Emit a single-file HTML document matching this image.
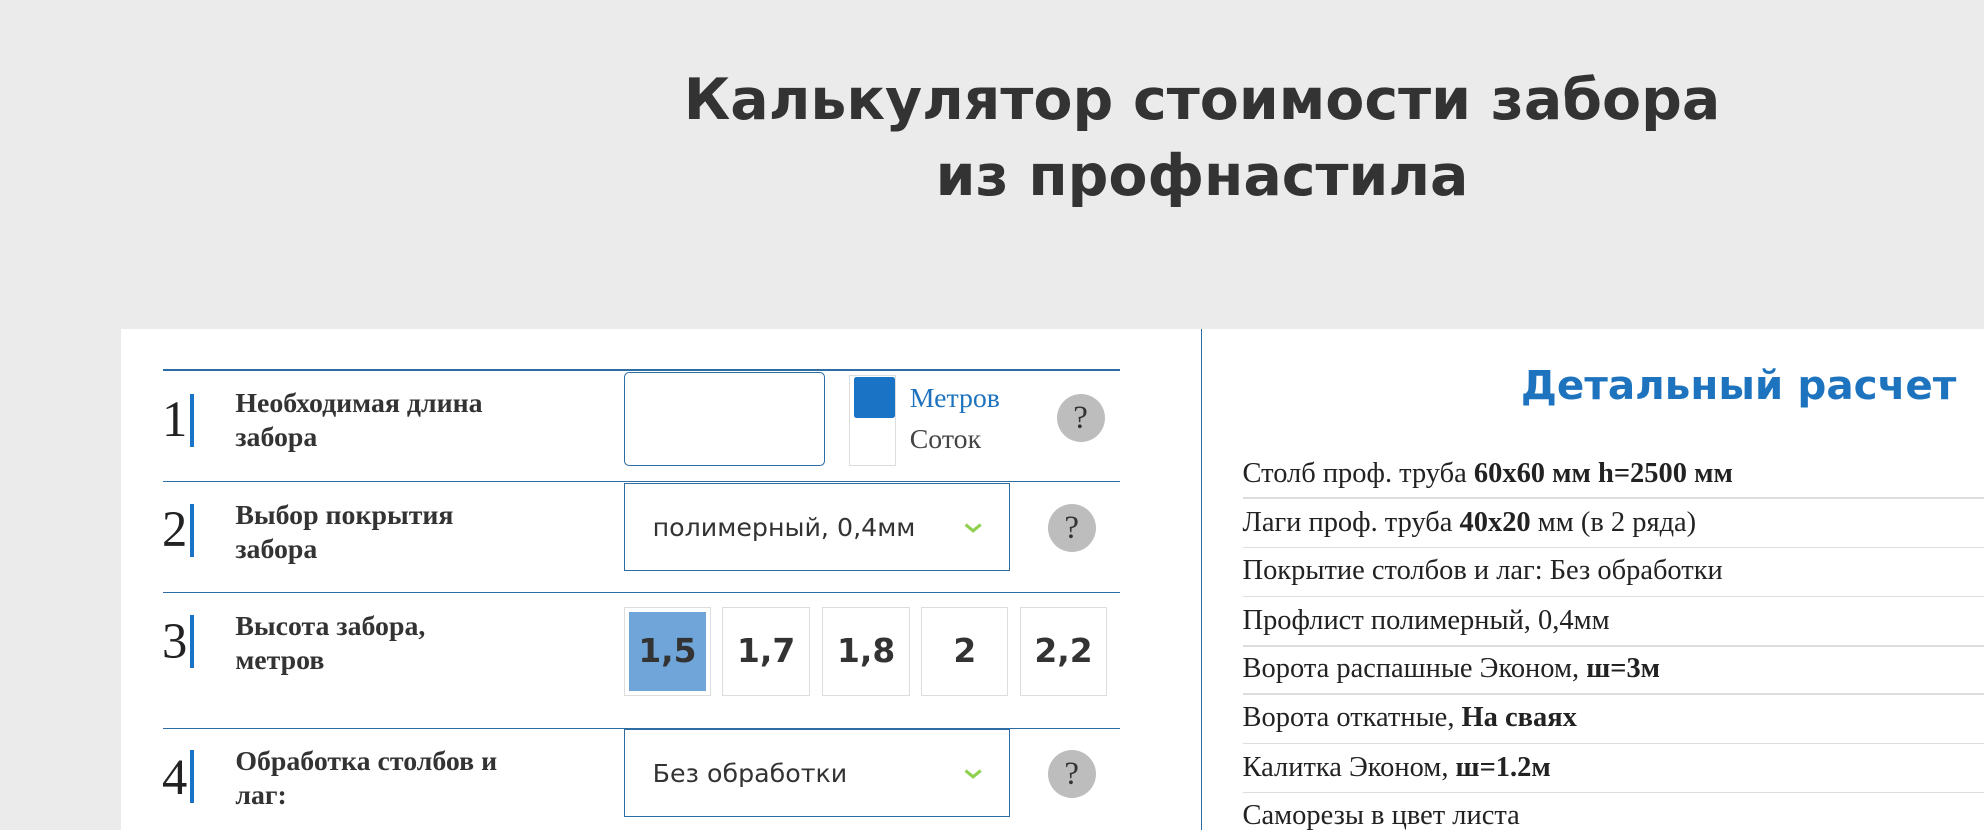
<!DOCTYPE html>
<html><head><meta charset="utf-8"><style>
html,body{margin:0;padding:0;width:1984px;height:830px;overflow:hidden;background:#ebebeb}
#w{position:relative;width:1568px;height:656px;zoom:1.26531;overflow:hidden}
.a{position:absolute}
.t{font-family:"DejaVu Sans","Liberation Sans",sans-serif;font-weight:bold;color:#333;font-size:45px;line-height:60px;text-align:center;left:500px;width:900px;top:50px}
.card{left:96px;top:260px;width:1500px;height:420px;background:#fff}
.div{left:949px;top:260px;width:1px;height:400px;background:#2e6da4}
.hl{left:129px;width:756px;height:1px;background:#2e6da4}
.num{font-family:"Liberation Serif",serif;font-size:40px;color:#222;left:128px}
.bar{left:150px;width:3px;height:42px;background:#1a73c4}
.lab{font-family:"Liberation Serif",serif;font-weight:bold;font-size:22px;line-height:27px;color:#333;left:186px}
.q{width:38px;height:38px;border-radius:50%;background:#bdbdbd;color:#333;font-family:"Liberation Serif",serif;font-size:26px;line-height:38px;text-align:center}
.sel{left:493px;width:305px;height:69px;border:1px solid #2e6da4;box-sizing:border-box;font-family:"DejaVu Sans","Liberation Sans",sans-serif;font-size:20px;color:#333;line-height:69px;padding-left:22px}
.chev{position:absolute;right:20px;top:30px}
.b{top:480px;width:69px;height:70px;border:1px solid #ddd;box-sizing:border-box;font-family:"DejaVu Sans",sans-serif;font-weight:bold;font-size:26px;color:#333;text-align:center;line-height:68px}
.h2{font-family:"DejaVu Sans","Liberation Sans",sans-serif;font-weight:bold;color:#1e73be;font-size:32px;left:1202px;top:285px;white-space:nowrap}
.li{left:982px;font-family:"Liberation Serif",serif;font-size:22.5px;color:#222;white-space:nowrap}
.sep{left:982px;width:600px;height:1px;background:#ddd}
</style></head><body><div id="w">
<div class="a t">Калькулятор стоимости забора<br>из профнастила</div>
<div class="a card"></div>
<div class="a div"></div>
<div class="a hl" style="top:292px"></div>
<div class="a hl" style="top:380px"></div>
<div class="a hl" style="top:468px"></div>
<div class="a hl" style="top:575px"></div>

<div class="a num" style="top:308px">1</div><div class="a bar" style="top:311px"></div>
<div class="a lab" style="top:306px">Необходимая длина<br>забора</div>
<div class="a" style="left:493px;top:294px;width:159px;height:74px;border:1px solid #2e6da4;border-radius:4px;box-sizing:border-box"></div>
<div class="a" style="left:671px;top:296px;width:37px;height:72px;border:1px solid #ddd;box-sizing:border-box"></div>
<div class="a" style="left:675px;top:298px;width:32px;height:32px;background:#1a73c4;border-radius:2px"></div>
<div class="a" style="left:719px;top:303px;font-family:'Liberation Serif',serif;font-size:22px;color:#1e73be">Метров</div>
<div class="a" style="left:719px;top:335px;font-family:'Liberation Serif',serif;font-size:22px;color:#444">Соток</div>
<div class="a q" style="left:835px;top:311px">?</div>

<div class="a num" style="top:395px">2</div><div class="a bar" style="top:398px"></div>
<div class="a lab" style="top:394px">Выбор покрытия<br>забора</div>
<div class="a sel" style="top:382px">полимерный, 0,4мм<svg class="chev" width="16" height="10" viewBox="0 0 16 10"><path d="M2 2l6 5 6-5" stroke="#8fd14f" stroke-width="2.5" fill="none"/></svg></div>
<div class="a q" style="left:828px;top:398px">?</div>

<div class="a num" style="top:484px">3</div><div class="a bar" style="top:486px"></div>
<div class="a lab" style="top:482px">Высота забора,<br>метров</div>
<div class="a b" style="left:493px;padding:3px"><div style="background:#6fa5d8;height:62px;line-height:62px">1,5</div></div>
<div class="a b" style="left:571px">1,7</div>
<div class="a b" style="left:650px">1,8</div>
<div class="a b" style="left:728px">2</div>
<div class="a b" style="left:806px">2,2</div>

<div class="a num" style="top:591px">4</div><div class="a bar" style="top:593px"></div>
<div class="a lab" style="top:589px">Обработка столбов и<br>лаг:</div>
<div class="a sel" style="top:576px;height:70px;line-height:70px">Без обработки<svg class="chev" width="16" height="10" viewBox="0 0 16 10"><path d="M2 2l6 5 6-5" stroke="#8fd14f" stroke-width="2.5" fill="none"/></svg></div>
<div class="a q" style="left:828px;top:593px">?</div>

<div class="a h2">Детальный расчет</div>
<div class="a li" style="top:362px">Столб проф. труба <b>60х60 мм h=2500 мм</b></div>
<div class="a sep" style="top:393px"></div>
<div class="a li" style="top:401px">Лаги проф. труба <b>40х20</b> мм (в 2 ряда)</div>
<div class="a sep" style="top:432px"></div>
<div class="a li" style="top:439px">Покрытие столбов и лаг: Без обработки</div>
<div class="a sep" style="top:471px"></div>
<div class="a li" style="top:478px">Профлист полимерный, 0,4мм</div>
<div class="a sep" style="top:510px"></div>
<div class="a li" style="top:516px">Ворота распашные Эконом, <b>ш=3м</b></div>
<div class="a sep" style="top:548px"></div>
<div class="a li" style="top:555px">Ворота откатные, <b>На сваях</b></div>
<div class="a sep" style="top:587px"></div>
<div class="a li" style="top:594px">Калитка Эконом, <b>ш=1.2м</b></div>
<div class="a sep" style="top:626px"></div>
<div class="a li" style="top:632px">Саморезы в цвет листа</div>
</div></body></html>
